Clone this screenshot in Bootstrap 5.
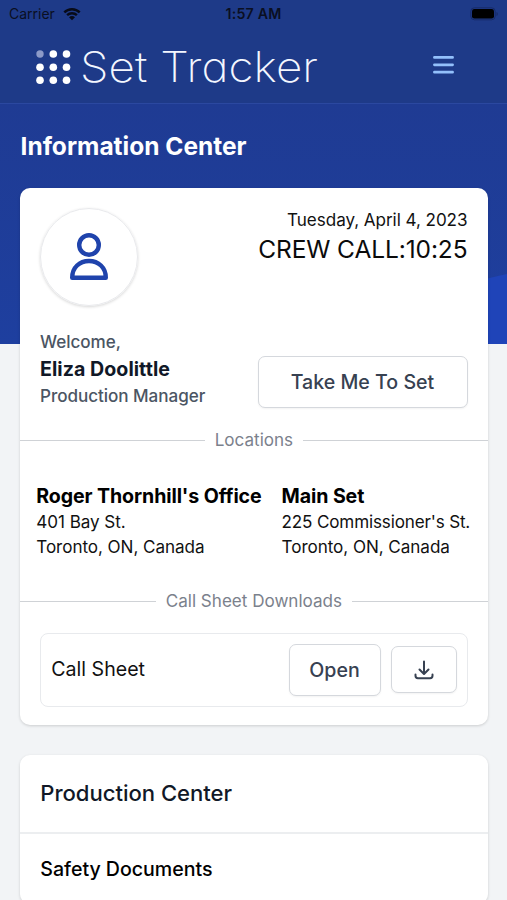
<!DOCTYPE html>
<html lang="en">
<head>
<meta charset="utf-8">
<meta name="viewport" content="width=device-width, initial-scale=1">
<title>Set Tracker</title>
<link href="https://cdn.jsdelivr.net/npm/bootstrap@5.3.0/dist/css/bootstrap.min.css" rel="stylesheet">
<style>
body{font-family:Inter,"Liberation Sans",sans-serif;background:#f2f4f6;color:#111;font-size:17.1px;line-height:24.5px;height:900px;overflow:hidden}
.top-area{background:#1e3a88;height:104px;border-bottom:1px solid #2b48a0}
.status{height:27px;padding:0 9px;font-size:14px;color:#0a0f22;line-height:27px}
.status>*{flex:1 1 0}
.clock{font-weight:600;font-size:14.2px;letter-spacing:.2px}
.brand-row{height:76px;padding:0 53px 0 35px}
.brand-name{font-weight:200;font-size:42.5px;line-height:50px;color:#f4f7ff;font-feature-settings:"cv11";white-space:nowrap;letter-spacing:.1px;margin-left:9px;padding-top:3px;transform:scaleX(1.075);transform-origin:left}
.hero{height:240px;background:linear-gradient(#1f3b93,#1e3f9f);margin-bottom:-156px;position:relative}
.hero svg{position:absolute;right:0;bottom:0}
h1{font-size:24.5px;font-weight:700;line-height:30px;color:#fff;padding:27px 20.5px 0}
.panel{margin:0 19.5px 0 20.3px;background:#fff;border-radius:10px;box-shadow:0 1px 3px rgba(0,0,0,.16);position:relative}
.main-panel{height:537px;padding-top:20px}
.avatar{width:98px;height:98px;border:1.5px solid #e8e9ec;box-shadow:0 1px 3px rgba(0,0,0,.16);padding-bottom:2px;margin-left:-.6px}
.call{font-size:24.5px;line-height:32px;color:#0b0b0b;letter-spacing:-.1px}
.date{letter-spacing:-.06px}
.profile{margin-top:24px}
.muted-text{color:#4b5563;font-weight:450;letter-spacing:-.05px;margin-left:-.3px}
.strong-name{font-size:19.6px;font-weight:700;line-height:29px;color:#111827;letter-spacing:.05px}
.soft-btn{--bs-btn-color:#374151;--bs-btn-border-color:#d5d8dd;--bs-btn-bg:#fff;font-size:19.6px;font-weight:500;border-radius:7px;height:52px;box-shadow:0 1px 2px rgba(0,0,0,.05);padding:2px 0 0;border-width:1.5px}
.set-btn{width:210px}
.open-btn{width:92px}
.dl-btn{width:66px;height:47px;margin-left:10px;padding:0}
.rule-line{height:1px;background:#cfd2d6}
.divider{color:#7b818c;gap:10px;height:24px;white-space:nowrap;letter-spacing:-.02px}
.first-divider{margin-top:20px}
.place{font-size:17.1px;margin:31px 0 30px 16px;gap:20px;white-space:nowrap;line-height:24.8px;letter-spacing:-.06px}
.place h2{font-size:19.6px;font-weight:700;line-height:27px;color:#000;margin:0;letter-spacing:-.1px}
.street{letter-spacing:-.17px}
.sheet{border:1.5px solid #e8eaed;border-radius:8px;height:74px;margin:19px 20px 0;padding:0 10px}
.sheet-name{font-size:19.6px}
.list-panel{margin-top:30px}
.section-head{height:79px;border-bottom:2px solid #eceef0;font-size:22.1px;font-weight:500;color:#111827}
.section-row{height:70px;font-size:19.6px;font-weight:500;color:#000}
.section-head span,.section-row span{letter-spacing:-.03px}
</style>
<script src="https://cdn.jsdelivr.net/npm/bootstrap@5.3.0/dist/js/bootstrap.bundle.min.js"></script>
</head>
<body>
<header class="top-area">
  <div class="status d-flex align-items-center">
    <div class="d-flex align-items-center gap-2"><span>Carrier</span>
      <svg width="18" height="14" viewBox="0 0 18 14" class="mb-0"><path d="M1.300 5.400C5.500 1.200 12.500 1.200 16.700 5.400M4.100 8.200c2.700-2.600 7.100-2.600 9.800 0" fill="none" stroke="#080b18" stroke-width="2.400"/><path d="M6 10.200c1.700-1.500 4.300-1.500 6 0L9 13.300z" fill="#080b18"/></svg>
    </div>
    <div class="clock text-center">1:57 AM</div>
    <div class="d-flex justify-content-end"><svg width="28" height="14" viewBox="0 0 28 14"><rect x=".8" y=".8" width="24.400" height="12" rx="3.600" fill="none" stroke="#172b68"/><rect x="2" y="2" width="22" height="9.600" rx="2.400" fill="#000"/><path d="M26.500 5v4q1.300-.6 1.300-2t-1.300-2z" fill="#172b68"/></svg></div>
  </div>
  <nav class="brand-row d-flex align-items-center justify-content-between">
    <div class="d-flex align-items-center">
      <svg width="36" height="39" viewBox="0 -3 36 39" fill="#fff"><circle cx="5" cy="5" r="3.700" fill="#8c9ac8"/><circle cx="18.300" cy="5" r="3.800"/><circle cx="31.500" cy="5" r="3.800"/><circle cx="5" cy="18.200" r="3.800"/><circle cx="18.300" cy="18.200" r="3.800"/><circle cx="31.500" cy="18.200" r="3.800"/><circle cx="5" cy="31.300" r="3.800"/><circle cx="18.300" cy="31.300" r="3.800"/><circle cx="31.500" cy="31.300" r="3.800"/></svg>
      <span class="brand-name">Set Tracker</span>
    </div>
    <svg width="21" height="20" viewBox="0 0 21 20" stroke="#93c0fb" stroke-width="2.700" stroke-linecap="round"><path d="M1.400 2.400h18.200M1.400 9.800h18.200M1.400 17.200h18.200"/></svg>
  </nav>
</header>
<div class="hero">
  <svg width="507" height="70" viewBox="0 0 507 70"><path d="M440 20Q480 5 507 0V70H440z" fill="#1f44b8"/></svg>
  <h1 class="position-relative m-0">Information Center</h1>
</div>
<main>
  <section class="panel main-panel">
    <div class="d-flex justify-content-between px-3 mx-1">
      <div class="avatar rounded-circle d-flex align-items-center justify-content-center">
        <svg width="40" height="49" viewBox="0 0 40 49" fill="none" stroke="#1f43ac" stroke-width="4.400" stroke-linejoin="round"><circle cx="20" cy="13" r="9.800"/><path d="M3.200 45.700C3.200 35.500 10.500 29 20 29s16.800 6.500 16.800 16.700z"/></svg>
      </div>
      <div class="text-end"><div class="date">Tuesday, April 4, 2023</div><div class="call">CREW CALL:10:25</div></div>
    </div>
    <div class="profile d-flex justify-content-between align-items-end px-3 mx-1">
      <div class="muted-text"><div>Welcome,</div><div class="strong-name">Eliza Doolittle</div><div>Production Manager</div></div>
      <button class="btn soft-btn set-btn">Take Me To Set</button>
    </div>
    <div class="divider first-divider d-flex align-items-center"><span class="rule-line flex-fill"></span><span>Locations</span><span class="rule-line flex-fill"></span></div>
    <div class="d-flex place">
      <div><h2>Roger Thornhill's Office</h2>401 Bay St.<br>Toronto, ON, Canada</div>
      <div><h2>Main Set</h2><span class="street">225 Commissioner's St.</span><br>Toronto, ON, Canada</div>
    </div>
    <div class="divider d-flex align-items-center"><span class="rule-line flex-fill"></span><span>Call Sheet Downloads</span><span class="rule-line flex-fill"></span></div>
    <div class="sheet d-flex align-items-center">
      <span class="me-auto sheet-name">Call Sheet</span>
      <button class="btn soft-btn open-btn">Open</button>
      <button class="btn soft-btn dl-btn d-flex align-items-center justify-content-center" aria-label="Download"><svg width="20" height="20" viewBox="0 0 20 20" fill="none" stroke="#374151" stroke-width="2" stroke-linecap="round" stroke-linejoin="round"><path d="M10 1.500v12M5.500 9.500l4.500 4.500 4.500-4.500M1.500 14.500v1.300q0 2.400 2.400 2.400h12.200q2.400 0 2.400-2.400v-1.300"/></svg></button>
    </div>
  </section>
  <section class="panel list-panel">
    <div class="section-head d-flex align-items-center px-3"><span class="ms-1">Production Center</span></div>
    <div class="section-row d-flex align-items-center px-3"><span class="ms-1">Safety Documents</span></div>
  </section>
</main>
</body>
</html>
